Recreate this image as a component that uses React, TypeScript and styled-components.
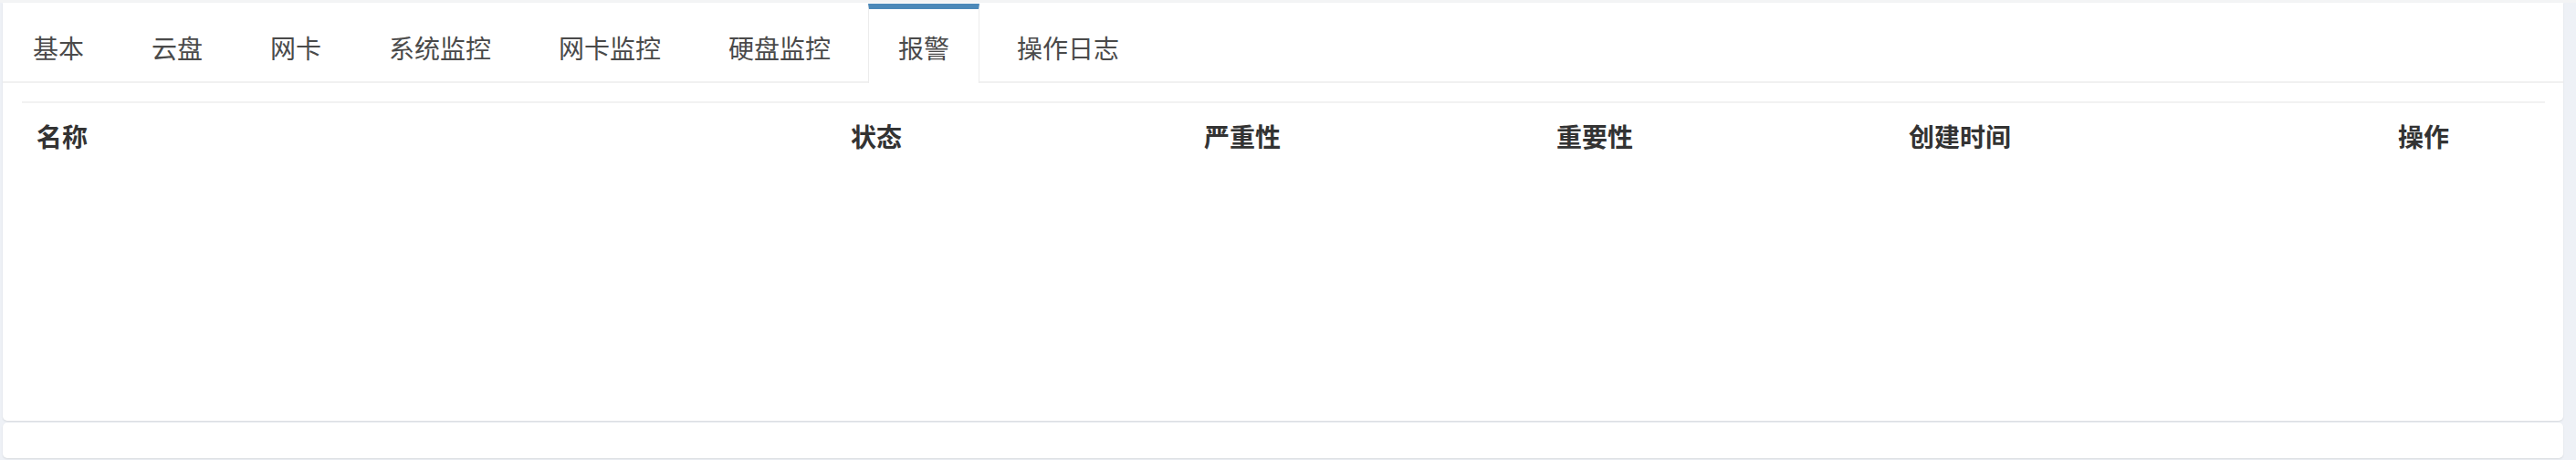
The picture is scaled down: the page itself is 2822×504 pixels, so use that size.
import React from "react";
import styled, { createGlobalStyle } from "styled-components";

const GlobalStyle = createGlobalStyle`
  html, body { margin: 0; padding: 0; background: #eef1f6; }
  body { font-family: "Noto Sans CJK SC", "Noto Sans", sans-serif; }
  * { box-sizing: border-box; }
`;

const Page = styled.div`
  width: 2822px;
  height: 504px;
  display: flex;
  flex-direction: column;
  gap: 2px;
  padding: 0 14px 2px 3px;
  background: #eef1f6;
  border-top: 3px solid #f3f4f5;
`;

const Card = styled.div`
  background: #fff;
  border-radius: 0 0 5px 5px;
  box-shadow: 0 1px 2px rgba(0, 0, 0, 0.1);
`;

const MainCard = styled(Card)`
  height: 458px;
  display: flex;
  flex-direction: column;
`;

const FooterCard = styled(Card)`
  flex: 1;
  border-radius: 5px;
`;

const TabBar = styled.div`
  display: flex;
  align-items: stretch;
  height: 88px;
  padding: 1px 0 0 0;
  border-bottom: 2px solid #f1f1f1;
`;

const Tab = styled.div<{ $active?: boolean }>`
  display: flex;
  align-items: center;
  padding: 3px 32px 0;
  margin-right: 8px;
  margin-bottom: -2px;
  font-size: 28px;
  line-height: 40px;
  color: #4a4a4a;
  white-space: nowrap;
  border-top: 6px solid ${(p) => (p.$active ? "#4c89b9" : "transparent")};
  border-left: 1px solid ${(p) => (p.$active ? "#ececec" : "transparent")};
  border-right: 1px solid ${(p) => (p.$active ? "#ececec" : "transparent")};
  background: ${(p) => (p.$active ? "#fff" : "transparent")};
`;

const Body = styled.div`
  padding: 20px 20px 0 21px;
`;

const HeaderRow = styled.div`
  display: grid;
  grid-template-columns: 892px 387px 386px 386px 536px 1fr;
  border-top: 2px solid #f2f2f2;
  padding: 16px 0;
`;

const HeadCell = styled.div`
  padding: 0 16px;
  font-size: 28px;
  line-height: 40px;
  font-weight: 700;
  color: #333;
  white-space: nowrap;
`;

const tabs = ["基本", "云盘", "网卡", "系统监控", "网卡监控", "硬盘监控", "报警", "操作日志"];
const columns = ["名称", "状态", "严重性", "重要性", "创建时间", "操作"];

export default function App() {
  return (
    <>
      <GlobalStyle />
      <Page>
        <MainCard>
          <TabBar>
            {tabs.map((t) => (
              <Tab key={t} $active={t === "报警"}>
                {t}
              </Tab>
            ))}
          </TabBar>
          <Body>
            <HeaderRow>
              {columns.map((c) => (
                <HeadCell key={c}>{c}</HeadCell>
              ))}
            </HeaderRow>
          </Body>
        </MainCard>
        <FooterCard />
      </Page>
    </>
  );
}
